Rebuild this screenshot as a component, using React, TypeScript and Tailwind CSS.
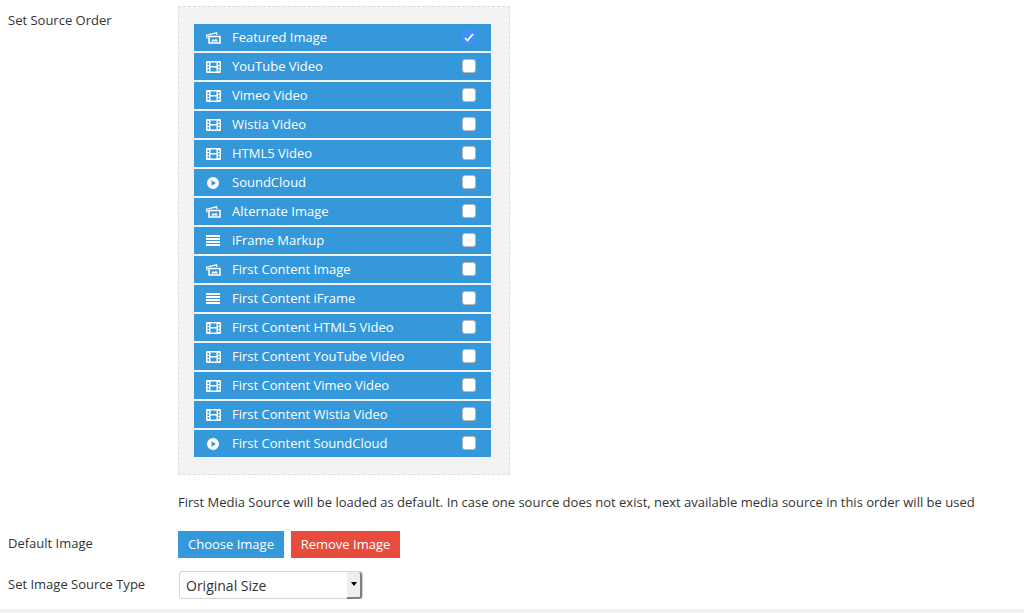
type IconKind = 'image' | 'film' | 'play' | 'lines';

const sources: { label: string; icon: IconKind; checked?: boolean }[] = [
  { label: 'Featured Image', icon: 'image', checked: true },
  { label: 'YouTube Video', icon: 'film' },
  { label: 'Vimeo Video', icon: 'film' },
  { label: 'Wistia Video', icon: 'film' },
  { label: 'HTML5 Video', icon: 'film' },
  { label: 'SoundCloud', icon: 'play' },
  { label: 'Alternate Image', icon: 'image' },
  { label: 'iFrame Markup', icon: 'lines' },
  { label: 'First Content Image', icon: 'image' },
  { label: 'First Content iFrame', icon: 'lines' },
  { label: 'First Content HTML5 Video', icon: 'film' },
  { label: 'First Content YouTube Video', icon: 'film' },
  { label: 'First Content Vimeo Video', icon: 'film' },
  { label: 'First Content Wistia Video', icon: 'film' },
  { label: 'First Content SoundCloud', icon: 'play' },
];

function SourceIcon({ kind }: { kind: IconKind }) {
  if (kind === 'film') {
    return (
      <svg width="15" height="12" viewBox="0 0 15 12" className="text-white">
        <path
          fillRule="evenodd"
          fill="currentColor"
          d="M1 0h13a1 1 0 0 1 1 1v10a1 1 0 0 1-1 1H1a1 1 0 0 1-1-1V1a1 1 0 0 1 1-1zM1.500 2v2h1.500V2zM1.500 5v2h1.500V5zM1.500 8v2h1.500V8zM12 2v2h1.500V2zM12 5v2h1.500V5zM12 8v2h1.500V8zM4.500 1.500v3.500h6V1.500zM4.500 6.500v4h6v-4z"
        />
      </svg>
    );
  }
  if (kind === 'play') {
    return (
      <svg width="12" height="12" viewBox="0 0 12 12" className="text-white">
        <path fillRule="evenodd" fill="currentColor" d="M6 0a6 6 0 1 1 0 12A6 6 0 0 1 6 0zM4.500 3.200v5.600L9 6z" />
      </svg>
    );
  }
  if (kind === 'lines') {
    return (
      <svg width="14" height="11" viewBox="0 0 14 11" className="text-white">
        <path fill="currentColor" d="M0 0h14v2H0zM0 3h14v2H0zM0 6h14v2H0zM0 9h14v2H0z" />
      </svg>
    );
  }
  return (
    <svg width="15" height="12" viewBox="0 0 15 12" fill="none" className="text-white">
      <path d="M3 4.500h11v6.500H3z" stroke="currentColor" strokeWidth="1.600" />
      <path d="M1 6.500L0.600 3.200 10.500 0.800l0.500 2" stroke="currentColor" strokeWidth="1.300" />
      <path d="M5 9.500l2-2.500 1.500 1.300L10 6.500l2 3z" fill="currentColor" />
    </svg>
  );
}

function SourceRow({ label, icon, checked }: { label: string; icon: IconKind; checked?: boolean }) {
  return (
    <li className="flex h-[27px] items-center bg-[#3498db] text-[13px] text-white">
      <span className={`w-[38px] shrink-0 ${icon === 'play' ? 'pl-[13px]' : 'pl-3'}`}>
        <SourceIcon kind={icon} />
      </span>
      <span className="flex-1">{label}</span>
      {checked ? (
        <span className="mb-px mr-[15px] flex h-[14px] w-[14px] items-center justify-center rounded-[3px] bg-[#4290f8]">
          <svg width="10" height="9" viewBox="0 0 10 9" fill="none">
            <path d="M1 5l2.500 2.500L9 1" stroke="white" strokeWidth="1.700" />
          </svg>
        </span>
      ) : (
        <span className="mb-px mr-[15px] h-[14px] w-[14px] rounded-[3px] border border-[#b9b9b9] bg-white" />
      )}
    </li>
  );
}

export default function App() {
  return (
    <div className="flex h-[613px] w-[1024px] flex-col overflow-hidden bg-white font-['Open_Sans',sans-serif] text-[13px] text-[#333]">
      <div className="flex-1 pl-2 pt-[6px]">
        <div className="grid grid-cols-[170px_1fr]">
          <div className="pt-[6px] leading-[17px]">Set Source Order</div>
          <div>
            <div className="h-[469px] w-[332px] border border-dashed border-[#dcdcdc] bg-[#f3f3f3] pl-[15px] pt-[17px]">
              <ul className="flex w-[297px] flex-col gap-[2px]">
                {sources.map((s) => (
                  <SourceRow key={s.label} label={s.label} icon={s.icon} checked={s.checked} />
                ))}
              </ul>
            </div>
            <p className="mt-[19px] leading-[17px]">
              First Media Source will be loaded as default. In case one source does not exist, next available media source in this order will be used
            </p>
          </div>

          <div className="mt-[24px] leading-[17px]">Default Image</div>
          <div className="mt-[20px] flex gap-[7px]">
            <button type="button" className="h-[27px] w-[106px] bg-[#3498db] text-[13px] text-white">
              Choose Image
            </button>
            <button type="button" className="h-[27px] w-[109px] bg-[#e74c3c] text-[13px] text-white">
              Remove Image
            </button>
          </div>

          <div className="mt-[18px] leading-[17px]">Set Image Source Type</div>
          <div className="mt-[13px] pl-px">
            <div className="flex h-[28px] w-[184px] items-center justify-between rounded-[3px] border border-[#d5d5d5] bg-white pl-[6px] text-[14px]">
              <span>Original Size</span>
              <span className="flex h-[27px] w-[15px] items-center justify-center rounded-r-[3px] border-r-2 border-b-2 border-[#808080] bg-[#eeeeee]">
                <span className="h-0 w-0 border-x-[3px] border-t-[4px] border-x-transparent border-t-black" />
              </span>
            </div>
          </div>
        </div>
      </div>
      <div className="h-[4px] bg-[#f0f0f0]" />
    </div>
  );
}
